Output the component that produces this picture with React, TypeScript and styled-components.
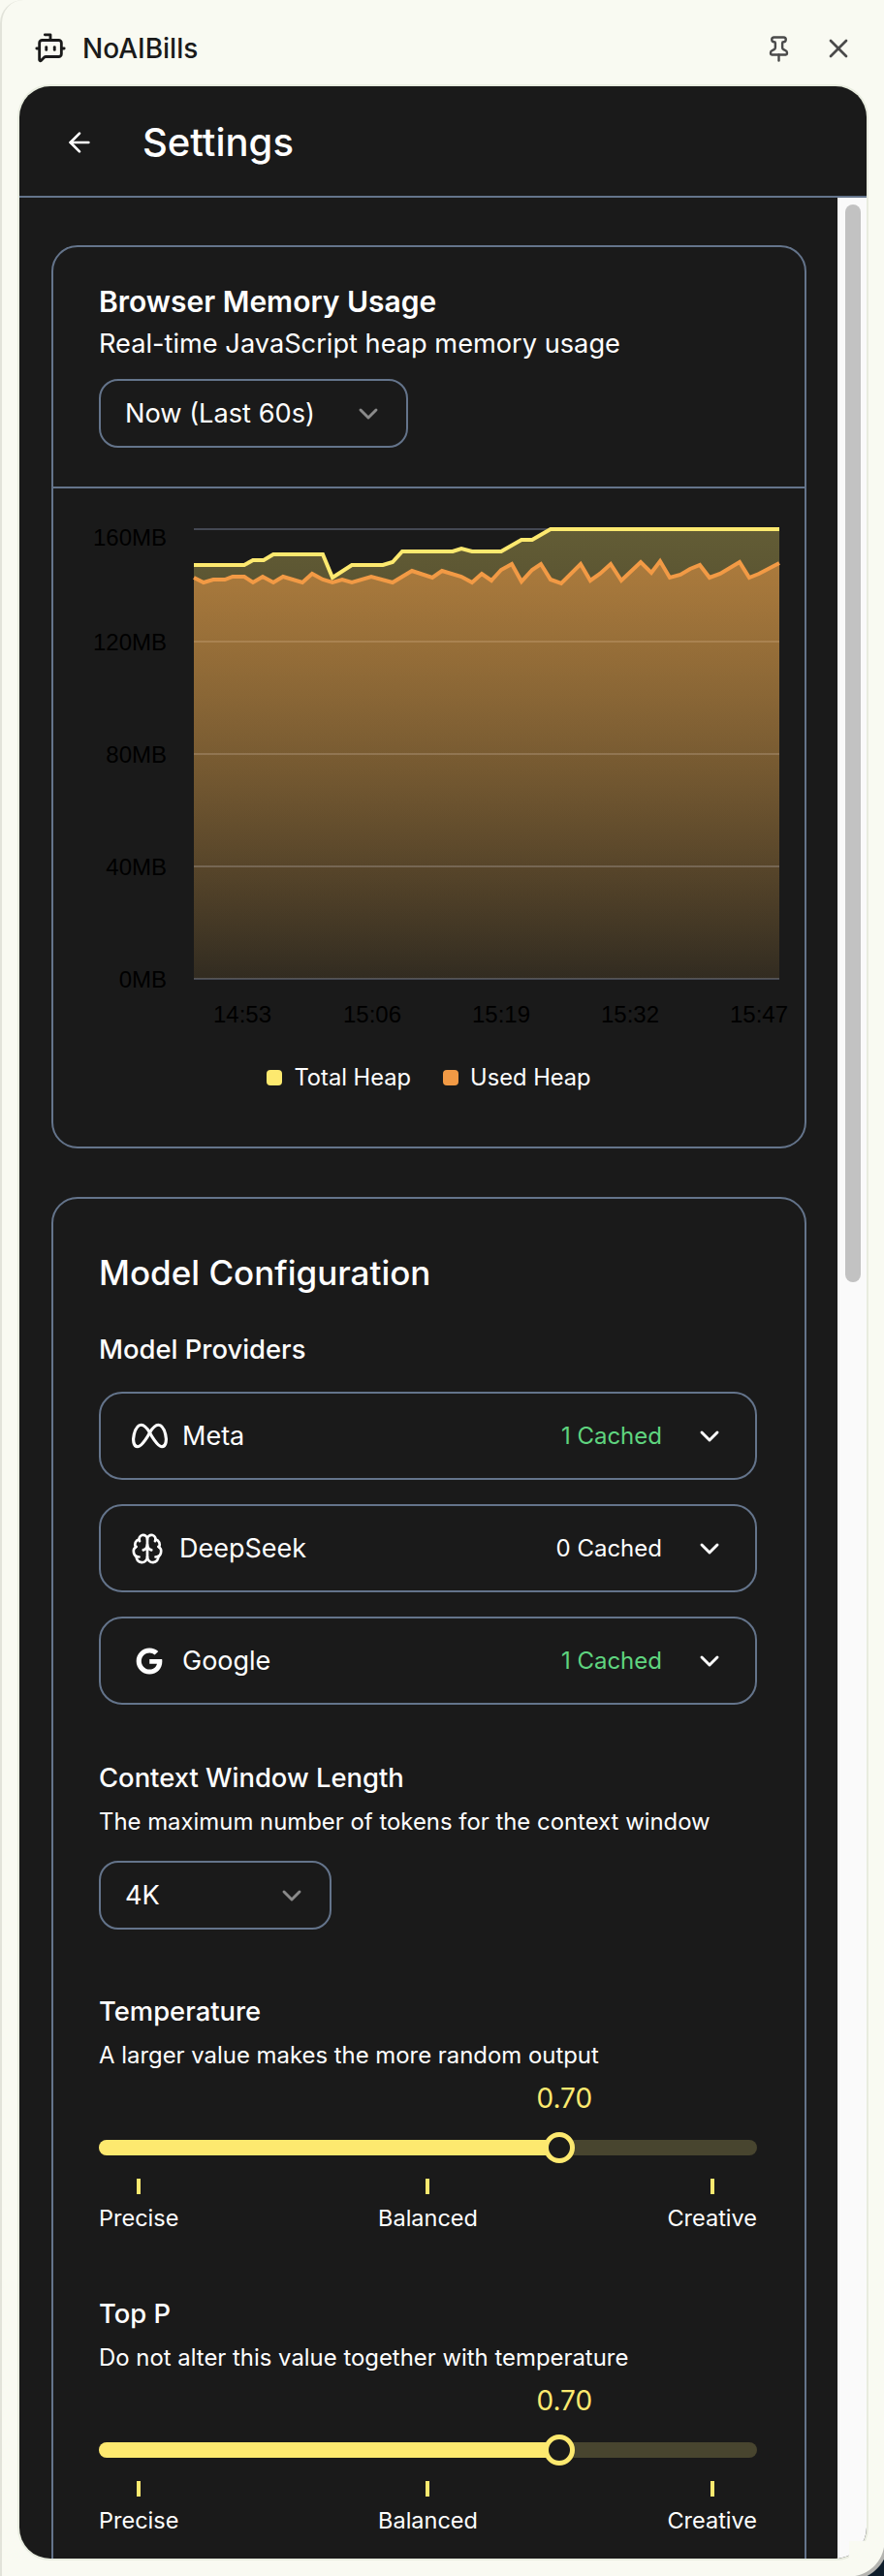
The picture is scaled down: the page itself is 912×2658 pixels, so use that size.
import styled, {createGlobalStyle} from 'styled-components';
import {ArrowLeft, BotMessageSquare, Brain, ChevronDown, Pin, X} from 'lucide-react';
import {FaGoogle} from 'react-icons/fa';
import {TbBrandMeta} from 'react-icons/tb';
import type {ReactNode} from 'react';

const YELLOW = '#fde96f';
const ORANGE = '#f29a45';
const BORDER = '#64748b';

const GlobalStyle = createGlobalStyle`
  html, body {
    margin: 0;
    padding: 0;
    background: #f9faf2;
  }
  * {
    box-sizing: border-box;
  }
`;

const Page = styled.div`
  position: relative;
  width: 912px;
  height: 2658px;
  overflow: hidden;
  background: #f9faf2;
  border-left: 2px solid #e2e3da;
  border-top-left-radius: 24px;
  font-family: Inter, "Liberation Sans", sans-serif;
  color: #fff;
  display: flex;
  flex-direction: column;
`;

const WindowCorner = styled.div`
  position: absolute;
  right: 0;
  bottom: 0;
  width: 36px;
  height: 36px;
  background: radial-gradient(circle at 0 0, #f9faf2 36px, #b4b4b0 37px, #b4b4b0 40px, #0e1d2b 41px);
`;

const TitleBar = styled.div`
  height: 89px;
  flex: none;
  display: flex;
  align-items: center;
  padding: 11px 31px 0 33px;
  color: #1a1a1a;
`;

const AppName = styled.span`
  font-size: 28px;
  font-weight: 500;
  margin-left: 16px;
  flex: 1;
`;

const TitleAction = styled.span`
  display: flex;
  color: #4a4a4a;
  margin-left: 31px;
`;

const Panel = styled.div`
  flex: none;
  width: 874px;
  height: 2551px;
  margin-left: 18px;
  border-radius: 32px;
  overflow: hidden;
  background: #1a1a1a;
  box-shadow: 0 0 0 2px #e8ecdf;
  display: flex;
  flex-direction: column;
`;

const PanelHeader = styled.div`
  height: 115px;
  flex: none;
  display: flex;
  align-items: center;
  gap: 49px;
  padding: 2px 0 0 46px;
  border-bottom: 2px solid ${BORDER};
`;

const PanelTitle = styled.h1`
  margin: 0;
  font-size: 40px;
  font-weight: 500;
`;

const ScrollArea = styled.div`
  flex: 1;
  display: flex;
  min-height: 0;
  overflow: hidden;
`;

const Content = styled.div`
  flex: 1;
  padding: 49px 32px 0 33px;
`;

const Scrollbar = styled.div`
  width: 30px;
  flex: none;
  padding: 7px 0 0 6px;
  background: #fafafa;
  border-left: 2px solid #f0f0f0;
`;

const Thumb = styled.div`
  width: 16px;
  height: 1112px;
  border-radius: 8px;
  background: #c2c2c2;
`;

const Card = styled.section`
  border: 2px solid ${BORDER};
  border-radius: 27px;
  margin-bottom: 50px;
`;

const MemoryHead = styled.div`
  padding: 35px 47px 40px;
  border-bottom: 2px solid ${BORDER};
`;

const CardTitle = styled.h2`
  margin: 0;
  font-size: 30px;
  line-height: 43px;
  font-weight: 600;
`;

const Sub = styled.p`
  margin: 0;
  font-size: 27.2px;
  line-height: 44px;
`;

const Select = styled.div<{$width: number}>`
  width: ${p => p.$width}px;
  height: 71px;
  border: 2px solid ${BORDER};
  border-radius: 20px;
  display: flex;
  align-items: center;
  justify-content: space-between;
  padding: 0 23px 0 25px;
  font-size: 27.2px;
  color: #fff;
`;

const SelectChevron = styled(ChevronDown)`
  color: #8a8a8a;
`;

const MemorySelect = styled(Select)`
  margin-top: 14px;
`;

const ContextSelect = styled(Select)`
  margin-top: 22px;
`;

const ChartBox = styled.div`
  padding: 27px 0 0;
  height: 679px;
`;

const ChartSvg = styled.svg`
  display: block;
`;

const AxisText = styled.text`
  font-family: "Liberation Sans", Arial, sans-serif;
  font-size: 24px;
  fill: #000;
`;

const Legend = styled.div`
  display: flex;
  justify-content: center;
  align-items: center;
  gap: 33px;
  font-size: 23.7px;
  margin-top: 31px;
`;

const LegendItem = styled.span`
  display: flex;
  align-items: center;
  gap: 12px;
`;

const Swatch = styled.i<{$color: string}>`
  width: 16px;
  height: 16px;
  border-radius: 4px;
  background: ${p => p.$color};
`;

const ConfigBody = styled.div`
  padding: 54px 49px 80px 47px;
`;

const ConfigTitle = styled.h2`
  margin: 0;
  font-size: 35px;
  line-height: 44px;
  font-weight: 500;
`;

const FieldLabel = styled.h3`
  margin: 0;
  font-size: 27.4px;
  line-height: 36px;
  font-weight: 450;
`;

const ProvidersLabel = styled(FieldLabel)`
  margin-top: 39px;
`;

const Providers = styled.div`
  margin-top: 26px;
  display: flex;
  flex-direction: column;
  gap: 25px;
`;

const Provider = styled.div`
  height: 91px;
  border: 2px solid ${BORDER};
  border-radius: 24px;
  display: flex;
  align-items: center;
  padding: 0 31px 0 33px;
  font-size: 27px;
`;

const ProviderIcon = styled.span<{$width: number; $gap: number}>`
  width: ${p => p.$width}px;
  flex: none;
  display: flex;
  justify-content: center;
  margin-right: ${p => p.$gap}px;
  & > svg {
    flex: none;
  }
`;

const ProviderName = styled.span`
  flex: 1;
`;

const Cached = styled.span<{$active: boolean}>`
  font-size: 24px;
  color: ${p => (p.$active ? '#5fd47f' : '#fff')};
  margin-right: 33px;
`;

const ContextField = styled.div`
  margin-top: 57px;
`;

const Hint = styled.p`
  margin: 10px 0 0;
  font-size: 23.9px;
  line-height: 36px;
`;

const SliderField = styled.div`
  margin-top: 66px;
  & + & {
    margin-top: 62px;
  }
`;

const SliderValue = styled.div<{$percent: number}>`
  margin: 8px 0 0 ${p => p.$percent}%;
  width: 0;
  display: flex;
  justify-content: center;
  font-size: 28px;
  line-height: 36px;
  color: ${YELLOW};
  white-space: nowrap;
  padding-left: 5px;
`;

const Track = styled.div`
  position: relative;
  height: 16px;
  margin-top: 25px;
  border-radius: 8px;
  background: #48452f;
`;

const Fill = styled.div`
  height: 100%;
  border-radius: 8px;
  background: ${YELLOW};
`;

const Handle = styled.div`
  position: absolute;
  top: -8px;
  width: 32px;
  height: 32px;
  margin-left: -16px;
  border-radius: 50%;
  border: 5px solid ${YELLOW};
  background: #1a1a1a;
`;

const Marks = styled.div`
  display: grid;
  grid-template-columns: 1fr auto 1fr;
  margin-top: 24px;
`;

const Mark = styled.div<{$align: string}>`
  display: flex;
  flex-direction: column;
  align-items: center;
  justify-self: ${p => p.$align};
  font-size: 23.5px;
  line-height: 36px;
`;

const Tick = styled.i`
  display: block;
  width: 4px;
  height: 16px;
  margin-bottom: 7px;
  background: ${YELLOW};
`;

const total: [number, number][] = [
    [200, 583], [252, 583], [261, 578], [272, 578], [282, 572], [333, 572], [343, 596], [363, 583],
    [395, 583], [405, 580], [415, 569], [467, 569], [476, 566], [487, 569], [517, 569], [538, 557],
    [549, 557], [568, 546], [804, 546],
];

const used: [number, number][] = [
    [200, 596], [210, 601], [220, 598], [232, 598], [240, 595], [252, 595], [261, 601], [271, 595],
    [282, 601], [292, 595], [312, 601], [322, 592], [333, 598], [343, 601], [353, 598], [363, 601],
    [383, 595], [405, 601], [425, 589], [446, 596], [456, 589], [476, 595], [487, 601], [497, 592],
    [507, 599], [517, 588], [528, 582], [538, 600], [549, 588], [558, 582], [568, 598], [579, 602],
    [599, 582], [609, 599], [619, 592], [630, 582], [641, 599], [661, 580], [672, 591], [681, 579],
    [691, 596], [702, 593], [712, 587], [722, 583], [732, 596], [743, 592], [763, 580], [773, 596],
    [783, 592], [804, 581],
];

// points above are page coordinates, the chart svg starts here
const ORIGIN_X = 55;
const ORIGIN_Y = 531;
const toLine = (pts: [number, number][]) =>
    pts.map(([x, y]) => `${x - ORIGIN_X},${y - ORIGIN_Y}`).join(' ');
const BASE = 1010 - ORIGIN_Y;
const toArea = (pts: [number, number][]) =>
    `${200 - ORIGIN_X},${BASE} ${toLine(pts)} ${804 - ORIGIN_X},${BASE}`;

const yTicks = [
    {label: '160MB', y: 546, labelY: 554},
    {label: '120MB', y: 662, labelY: 662},
    {label: '80MB', y: 778, labelY: 778},
    {label: '40MB', y: 894, labelY: 894},
    {label: '0MB', y: 1010, labelY: 1010},
];
const xTicks = [
    {label: '14:53', x: 250},
    {label: '15:06', x: 384},
    {label: '15:19', x: 517},
    {label: '15:32', x: 650},
    {label: '15:47', x: 783},
];

const MemoryChart = () => (
    <ChartSvg width={775} height={535} viewBox="0 0 775 535">
        <defs>
            <linearGradient id="totalFill" x1="0" y1="0" x2="0" y2="1">
                <stop offset="0%" stopColor={YELLOW} stopOpacity={0.32}/>
                <stop offset="100%" stopColor={YELLOW} stopOpacity={0.05}/>
            </linearGradient>
            <linearGradient id="usedFill" x1="0" y1="0" x2="0" y2="1">
                <stop offset="0%" stopColor={ORANGE} stopOpacity={0.52}/>
                <stop offset="100%" stopColor={ORANGE} stopOpacity={0.06}/>
            </linearGradient>
        </defs>
        {yTicks.map(t => (
            <line key={t.label} x1={145} x2={749} y1={t.y - ORIGIN_Y} y2={t.y - ORIGIN_Y}
                  stroke="#5b6172" strokeOpacity={0.65} strokeWidth={2}/>
        ))}
        <polygon points={toArea(total)} fill="url(#totalFill)"/>
        <polygon points={toArea(used)} fill="url(#usedFill)"/>
        <polyline points={toLine(total)} fill="none" stroke={YELLOW} strokeWidth={4}/>
        <polyline points={toLine(used)} fill="none" stroke={ORANGE} strokeWidth={4}/>
        {yTicks.map(t => (
            <AxisText key={t.label} x={117} y={t.labelY - ORIGIN_Y + 9} textAnchor="end">{t.label}</AxisText>
        ))}
        {xTicks.map(t => (
            <AxisText key={t.label} x={t.x - ORIGIN_X} y={1047 - ORIGIN_Y + 8} textAnchor="middle">{t.label}</AxisText>
        ))}
    </ChartSvg>
);

const ProviderRow = ({icon, name, cached, iconWidth, iconGap}: {
    icon: ReactNode;
    name: string;
    cached: number;
    iconWidth: number;
    iconGap: number;
}) => (
    <Provider>
        <ProviderIcon $width={iconWidth} $gap={iconGap}>{icon}</ProviderIcon>
        <ProviderName>{name}</ProviderName>
        <Cached $active={cached > 0}>{cached} Cached</Cached>
        <ChevronDown size={32} strokeWidth={2.2}/>
    </Provider>
);

const SliderRow = ({label, hint, value}: {label: string; hint: string; value: number}) => {
    const percent = value * 100;
    return (
        <SliderField>
            <FieldLabel>{label}</FieldLabel>
            <Hint>{hint}</Hint>
            <SliderValue $percent={percent}>{value.toFixed(2)}</SliderValue>
            <Track>
                <Fill style={{width: `${percent}%`}}/>
                <Handle style={{left: `${percent}%`}}/>
            </Track>
            <Marks>
                <Mark $align="start"><Tick/>Precise</Mark>
                <Mark $align="center"><Tick/>Balanced</Mark>
                <Mark $align="end"><Tick/>Creative</Mark>
            </Marks>
        </SliderField>
    );
};

const App = () => (
    <Page>
        <GlobalStyle/>
        <TitleBar>
            <BotMessageSquare size={34} strokeWidth={2}/>
            <AppName>NoAIBills</AppName>
            <TitleAction><Pin size={29} strokeWidth={2}/></TitleAction>
            <TitleAction><X size={32} strokeWidth={2}/></TitleAction>
        </TitleBar>
        <Panel>
            <PanelHeader>
                <ArrowLeft size={32} strokeWidth={2}/>
                <PanelTitle>Settings</PanelTitle>
            </PanelHeader>
            <ScrollArea>
                <Content>
                    <Card>
                        <MemoryHead>
                            <CardTitle>Browser Memory Usage</CardTitle>
                            <Sub>Real-time JavaScript heap memory usage</Sub>
                            <MemorySelect $width={319}>
                                Now (Last 60s)
                                <SelectChevron size={32} strokeWidth={2.2}/>
                            </MemorySelect>
                        </MemoryHead>
                        <ChartBox>
                            <MemoryChart/>
                            <Legend>
                                <LegendItem><Swatch $color={YELLOW}/>Total Heap</LegendItem>
                                <LegendItem><Swatch $color={ORANGE}/>Used Heap</LegendItem>
                            </Legend>
                        </ChartBox>
                    </Card>
                    <Card>
                        <ConfigBody>
                            <ConfigTitle>Model Configuration</ConfigTitle>
                            <ProvidersLabel>Model Providers</ProvidersLabel>
                            <Providers>
                                <ProviderRow icon={<TbBrandMeta size={45} strokeWidth={1.7}/>} name="Meta" cached={1}
                                             iconWidth={34} iconGap={17}/>
                                <ProviderRow icon={<Brain size={34} strokeWidth={1.9}/>} name="DeepSeek" cached={0}
                                             iconWidth={29} iconGap={19}/>
                                <ProviderRow icon={<FaGoogle size={28}/>} name="Google" cached={1}
                                             iconWidth={34} iconGap={17}/>
                            </Providers>
                            <ContextField>
                                <FieldLabel>Context Window Length</FieldLabel>
                                <Hint>The maximum number of tokens for the context window</Hint>
                                <ContextSelect $width={240}>
                                    4K
                                    <SelectChevron size={32} strokeWidth={2.2}/>
                                </ContextSelect>
                            </ContextField>
                            <SliderRow label="Temperature" hint="A larger value makes the more random output" value={0.7}/>
                            <SliderRow label="Top P" hint="Do not alter this value together with temperature" value={0.7}/>
                        </ConfigBody>
                    </Card>
                </Content>
                <Scrollbar><Thumb/></Scrollbar>
            </ScrollArea>
        </Panel>
        <WindowCorner/>
    </Page>
);

export default App;
